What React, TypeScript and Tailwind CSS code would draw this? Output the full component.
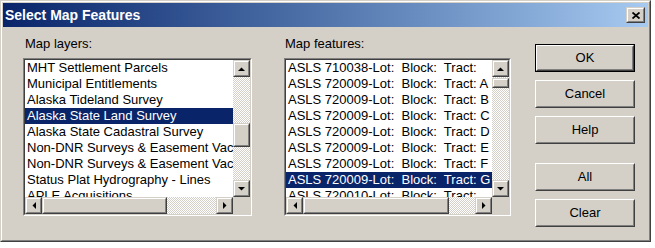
import React from "react";

const font = { fontFamily: '"Liberation Sans", Arial, sans-serif' };

const layers = [
  "MHT Settlement Parcels",
  "Municipal Entitlements",
  "Alaska Tideland Survey",
  "Alaska State Land Survey",
  "Alaska State Cadastral Survey",
  "Non-DNR Surveys & Easement Vacations",
  "Non-DNR Surveys & Easement Vacations",
  "Status Plat Hydrography - Lines",
  "APLE Acquisitions",
];

const features = [
  "ASLS 710038-Lot:  Block:  Tract:",
  "ASLS 720009-Lot:  Block:  Tract: A",
  "ASLS 720009-Lot:  Block:  Tract: B",
  "ASLS 720009-Lot:  Block:  Tract: C",
  "ASLS 720009-Lot:  Block:  Tract: D",
  "ASLS 720009-Lot:  Block:  Tract: E",
  "ASLS 720009-Lot:  Block:  Tract: F",
  "ASLS 720009-Lot:  Block:  Tract: G",
  "ASLS 720010-Lot:  Block:  Tract:",
];

function Raised({
  className = "",
  children,
}: {
  className?: string;
  children?: React.ReactNode;
}) {
  return (
    <div
      className={`shrink-0 border border-t-[#d4d0c8] border-l-[#d4d0c8] border-b-[#404040] border-r-[#404040] bg-[#d4d0c8] ${className}`}
    >
      <div className="flex h-full w-full items-center justify-center border border-t-white border-l-white border-b-[#808080] border-r-[#808080]">
        {children}
      </div>
    </div>
  );
}

function Arrow({ dir }: { dir: "up" | "down" | "left" | "right" }) {
  const pts = {
    up: "0,4 7,4 3.5,0.5",
    down: "0,0 7,0 3.5,3.5",
    left: "4,0 4,7 0.5,3.5",
    right: "0,0 0,7 3.5,3.5",
  }[dir];
  const vert = dir === "up" || dir === "down";
  return (
    <svg width={vert ? 7 : 4} height={vert ? 4 : 7} viewBox={vert ? "0 0 7 4" : "0 0 4 7"}>
      <polygon points={pts} fill="#000" />
    </svg>
  );
}

const track =
  "bg-[image:repeating-conic-gradient(#d4d0c8_0%_25%,#ffffff_0%_50%)] bg-[length:2px_2px]";

function ListBox({
  items,
  selected,
  thumbTop,
  thumbH,
  hThumb,
}: {
  items: string[];
  selected: number;
  thumbTop: number;
  thumbH: number;
  hThumb: number;
}) {
  return (
    <div className="border border-t-[#808080] border-l-[#808080] border-b-white border-r-white">
      <div className="flex h-[156px] flex-col border border-t-[#404040] border-l-[#404040] border-b-[#d4d0c8] border-r-[#d4d0c8] bg-white">
        <div className="flex h-[137px]">
          <div className="flex-1 overflow-hidden">
            {items.map((t, i) => (
              <div
                key={i}
                className={`h-[16px] whitespace-pre pl-[2px] text-[13px] leading-[16px] ${
                  i === selected ? "bg-[#0a246a] text-white" : "text-black"
                }`}
              >
                {t}
              </div>
            ))}
          </div>
          <div className="flex w-[17px] flex-col">
            <Raised className="h-[17px] w-[17px]">
              <Arrow dir="up" />
            </Raised>
            <div className={`flex flex-1 flex-col ${track}`}>
              <div style={{ height: thumbTop }} />
              <Raised className="w-[17px]" >
                <div style={{ height: thumbH - 4 }} />
              </Raised>
            </div>
            <Raised className="h-[17px] w-[17px]">
              <Arrow dir="down" />
            </Raised>
          </div>
        </div>
        <div className="flex h-[17px]">
          <Raised className="h-[17px] w-[17px]">
            <Arrow dir="left" />
          </Raised>
          <div className={`flex flex-1 ${track}`}>
            <Raised className="h-[17px]">
              <div style={{ width: hThumb - 4 }} />
            </Raised>
          </div>
          <Raised className="h-[17px] w-[17px]">
            <Arrow dir="right" />
          </Raised>
          <div className="h-[17px] w-[17px] bg-[#d4d0c8]" />
        </div>
      </div>
    </div>
  );
}

function Button({ label, isDefault }: { label: string; isDefault?: boolean }) {
  const inner = (
    <div className="h-full w-full border border-t-white border-l-white border-b-[#404040] border-r-[#404040]">
      <div className="flex h-full w-full items-center justify-center border border-t-[#d4d0c8] border-l-[#d4d0c8] border-b-[#808080] border-r-[#808080] text-[13px] text-black">
        {label}
      </div>
    </div>
  );
  return (
    <div className={`h-[28px] w-[100px] ${isDefault ? "border border-black" : ""}`}>
      {inner}
    </div>
  );
}

export default function App() {
  return (
    <div className="h-[248px] w-[655px] bg-white" style={font}>
      <div className="h-[242px] w-[651px] border border-t-[#d4d0c8] border-l-[#d4d0c8] border-b-[#404040] border-r-[#404040]">
        <div className="flex h-full w-full flex-col border border-t-white border-l-white border-b-[#808080] border-r-[#808080] bg-[#d4d0c8] p-px">
          {/* Title bar */}
          <div className="flex h-[24px] items-center justify-between bg-gradient-to-r from-[#0a246a] to-[#a6caf0] pl-[2px] pr-[3px]">
            <span className="text-[14px] font-bold text-white">Select Map Features</span>
            <Raised className="h-[16px] w-[19px]">
              <svg width="8" height="7" viewBox="0 0 8 7">
                <path d="M0.5 0.5 L7.5 6.5 M7.5 0.5 L0.5 6.5" stroke="#000" strokeWidth="1.8" />
              </svg>
            </Raised>
          </div>

          {/* Body */}
          <div className="flex">
            <div className="ml-[20px] w-[229px] pt-[9px]">
              <div className="mb-[6px] h-[16px] pl-[2px] text-[13px] leading-[16px] text-black">Map layers:</div>
              <ListBox items={layers} selected={3} thumbTop={46} thumbH={24} hThumb={125} />
            </div>
            <div className="ml-[32px] w-[227px] pt-[9px]">
              <div className="mb-[6px] h-[16px] pl-[1px] text-[13px] leading-[16px] text-black">Map features:</div>
              <ListBox items={features} selected={7} thumbTop={1} thumbH={10} hThumb={146} />
            </div>
            <div className="ml-[24px] flex w-[100px] flex-col pt-[17px]">
              <Button label="OK" isDefault />
              <div className="mt-[8px]"><Button label="Cancel" /></div>
              <div className="mt-[8px]"><Button label="Help" /></div>
              <div className="mt-[19px]"><Button label="All" /></div>
              <div className="mt-[8px]"><Button label="Clear" /></div>
            </div>
          </div>
        </div>
      </div>
    </div>
  );
}
